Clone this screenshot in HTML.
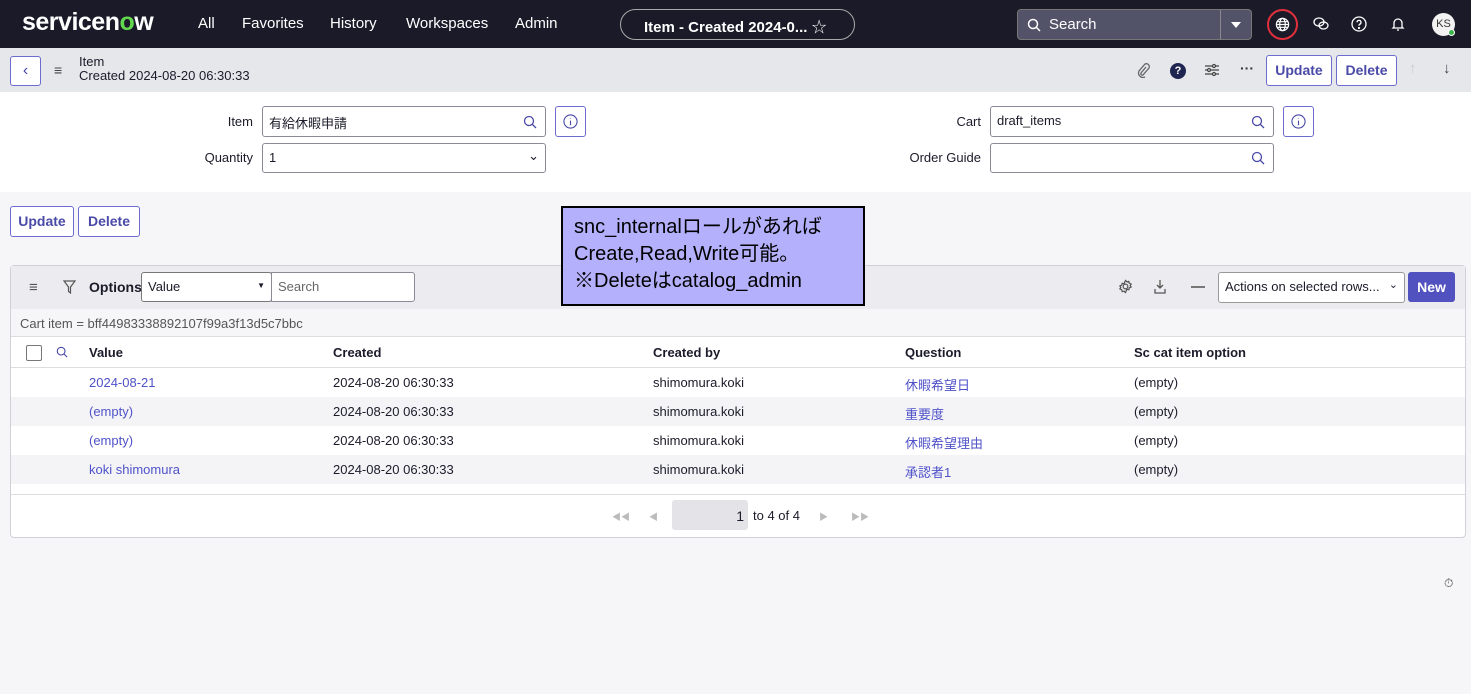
<!DOCTYPE html>
<html><head><meta charset="utf-8"><style>
*{box-sizing:border-box;margin:0;padding:0}
body{width:1471px;height:694px;background:#f6f6f8;font-family:"Liberation Sans","Noto Sans CJK JP",sans-serif;font-size:13px;color:#1b1b2a;position:relative;overflow:hidden}
.a{position:absolute}
.top{left:0;top:0;width:1471px;height:48px;background:#1a1a28;color:#fff}
.nav{top:15px;font-size:15px;color:#fff}
.btn{position:absolute;border:1px solid #6c6ccf;border-radius:3px;background:#fff;color:#4a4aa8;font-weight:bold;font-size:13px;text-align:center}
.inp{position:absolute;border:1px solid #8a8a99;border-radius:3px;background:#fff;font-size:13px;padding:6px 6px}
.lbl{position:absolute;font-size:13px;text-align:right}
.sb{position:absolute;border:1px solid #8a8a99;border-left:none;border-radius:0 3px 3px 0;background:#fff}
.row{position:absolute;left:11px;width:1454px;height:29px;font-size:13px}
.row span{position:absolute;top:7px}
.lk{color:#4f52c8}
</style></head><body>
<div class="a top">
 <div class="a" style="left:22px;top:8px;font-size:25px;font-weight:bold;letter-spacing:-0.5px">servicen<span style="color:#62d84e">o</span>w</div>
 <div class="a nav" style="left:198px">All</div>
 <div class="a nav" style="left:242px">Favorites</div>
 <div class="a nav" style="left:330px">History</div>
 <div class="a nav" style="left:406px">Workspaces</div>
 <div class="a nav" style="left:515px">Admin</div>
 <div class="a" style="left:620px;top:9px;width:235px;height:31px;border:1px solid #aaa;border-radius:16px;font-size:15px;font-weight:bold;padding:6px 0 0 23px">Item - Created 2024-0... <span style="font-weight:normal">☆</span></div>
 <div class="a" style="left:1017px;top:9px;width:235px;height:31px;background:#525268;border:1px solid #777;border-radius:4px;font-size:15px;padding:6px 0 0 31px">Search
  <svg class="a" style="left:9px;top:8px" width="14" height="14" viewBox="0 0 14 14"><circle cx="6" cy="6" r="4.5" fill="none" stroke="#fff" stroke-width="1.5"/><path d="M9.5 9.5l3.5 3.5" stroke="#fff" stroke-width="1.5"/></svg>
  <div class="a" style="left:202px;top:0;width:1px;height:29px;background:#888"></div>
  <div class="a" style="left:213px;top:12px;border:5px solid transparent;border-top:6px solid #fff"></div></div>
 <div class="a" style="left:1267px;top:9px;width:31px;height:31px;border:2px solid #e0303c;border-radius:50%"></div>
 <svg class="a" style="left:1275px;top:17px" width="15" height="15" viewBox="0 0 16 16" fill="none" stroke="#fff" stroke-width="1.3"><circle cx="8" cy="8" r="6.5"/><ellipse cx="8" cy="8" rx="3" ry="6.5"/><path d="M1.5 8h13M2.5 5h11M2.5 11h11"/></svg>
 <svg class="a" style="left:1313px;top:17px" width="16" height="14" viewBox="0 0 16 14" fill="none" stroke="#fff" stroke-width="1.3"><ellipse cx="6" cy="5" rx="5" ry="4"/><ellipse cx="10.5" cy="8.5" rx="4.5" ry="3.5"/></svg>
 <svg class="a" style="left:1351px;top:16px" width="16" height="16" viewBox="0 0 16 16" fill="none" stroke="#fff" stroke-width="1.3"><circle cx="8" cy="8" r="7"/><path d="M6 6.3a2 2 0 1 1 2.5 2c-.5.2-.5.6-.5 1.4"/><circle cx="8" cy="12" r=".5" fill="#fff"/></svg>
 <svg class="a" style="left:1391px;top:16px" width="14" height="16" viewBox="0 0 14 16" fill="none" stroke="#fff" stroke-width="1.3"><path d="M3 11V7a4 4 0 0 1 8 0v4l1 1H2z"/><path d="M6 14h2"/></svg>
 <div class="a" style="left:1432px;top:13px;width:23px;height:23px;border-radius:50%;background:#f2f2f2;color:#333;font-size:11px;text-align:center;line-height:23px">KS</div>
 <div class="a" style="left:1448px;top:29px;width:7px;height:7px;border-radius:50%;background:#3bb54a;border:1px solid #fff"></div>
</div>
<div class="a" style="left:0;top:48px;width:1471px;height:44px;background:#e6e7eb"></div>
<div class="btn" style="left:10px;top:56px;width:31px;height:30px;font-weight:normal;font-size:16px;line-height:27px">‹</div>
<div class="a" style="left:54px;top:62px;font-size:14px;color:#444">≡</div>
<div class="a" style="left:79px;top:55px;font-size:13px;line-height:14px">Item<br>Created 2024-08-20 06:30:33</div>
<svg class="a" style="left:1136px;top:62px" width="14" height="16" viewBox="0 0 14 16" fill="none" stroke="#666" stroke-width="1.3"><path d="M10 5L5 11a1.5 1.5 0 0 0 2 2l6-7a3 3 0 0 0-4-4L3 9a4.5 4.5 0 0 0 6 6"/></svg>
<div class="a" style="left:1170px;top:63px;width:16px;height:16px;border-radius:50%;background:#1e2550;color:#fff;font-size:11px;font-weight:bold;text-align:center;line-height:16px">?</div>
<svg class="a" style="left:1204px;top:63px" width="16" height="14" viewBox="0 0 16 14" stroke="#444" stroke-width="1.2" fill="#e6e7eb"><path d="M1 3h14M1 7h14M1 11h14"/><circle cx="10" cy="3" r="1.5"/><circle cx="5" cy="7" r="1.5"/><circle cx="10" cy="11" r="1.5"/></svg>
<div class="a" style="left:1240px;top:60px;font-size:14px;font-weight:bold;color:#333">···</div>
<div class="btn" style="left:1266px;top:55px;width:66px;height:31px;line-height:29px;font-size:14px">Update</div>
<div class="btn" style="left:1336px;top:55px;width:61px;height:31px;line-height:29px;font-size:14px">Delete</div>
<div class="a" style="left:1409px;top:60px;font-size:15px;color:#ccc">↑</div>
<div class="a" style="left:1443px;top:60px;font-size:15px;color:#445">↓</div>
<div class="a" style="left:0;top:92px;width:1471px;height:100px;background:#fff"></div>
<div class="lbl" style="left:150px;top:114px;width:103px">Item</div>
<div class="inp" style="left:262px;top:106px;width:255px;height:31px;border-radius:3px 0 0 3px">有給休暇申請</div>
<div class="sb" style="left:516px;top:106px;width:30px;height:31px"><svg class="a" style="left:7px;top:8px" width="14" height="14" viewBox="0 0 14 14"><circle cx="6" cy="6" r="4.5" fill="none" stroke="#4a4aa8" stroke-width="1.3"/><path d="M9.5 9.5l3.5 3.5" stroke="#4a4aa8" stroke-width="1.3"/></svg></div>
<div class="btn" style="left:555px;top:106px;width:31px;height:31px"><svg class="a" style="left:7px;top:7px" width="15" height="15" viewBox="0 0 16 16" fill="none" stroke="#4a4aa8" stroke-width="1.2"><circle cx="8" cy="8" r="7"/><path d="M8 7v5M8 4.5v.5"/></svg></div>
<div class="lbl" style="left:150px;top:150px;width:103px">Quantity</div>
<div class="inp" style="left:262px;top:143px;width:284px;height:30px">1<span class="a" style="right:6px;top:4px;font-size:13px">⌄</span></div>
<div class="lbl" style="left:880px;top:114px;width:101px">Cart</div>
<div class="inp" style="left:990px;top:106px;width:255px;height:31px;border-radius:3px 0 0 3px">draft_items</div>
<div class="sb" style="left:1244px;top:106px;width:30px;height:31px"><svg class="a" style="left:7px;top:8px" width="14" height="14" viewBox="0 0 14 14"><circle cx="6" cy="6" r="4.5" fill="none" stroke="#4a4aa8" stroke-width="1.3"/><path d="M9.5 9.5l3.5 3.5" stroke="#4a4aa8" stroke-width="1.3"/></svg></div>
<div class="btn" style="left:1283px;top:106px;width:31px;height:31px"><svg class="a" style="left:7px;top:7px" width="15" height="15" viewBox="0 0 16 16" fill="none" stroke="#4a4aa8" stroke-width="1.2"><circle cx="8" cy="8" r="7"/><path d="M8 7v5M8 4.5v.5"/></svg></div>
<div class="lbl" style="left:880px;top:150px;width:101px">Order Guide</div>
<div class="inp" style="left:990px;top:143px;width:255px;height:30px;border-radius:3px 0 0 3px"></div>
<div class="sb" style="left:1244px;top:143px;width:30px;height:30px"><svg class="a" style="left:7px;top:7px" width="14" height="14" viewBox="0 0 14 14"><circle cx="6" cy="6" r="4.5" fill="none" stroke="#4a4aa8" stroke-width="1.3"/><path d="M9.5 9.5l3.5 3.5" stroke="#4a4aa8" stroke-width="1.3"/></svg></div>
<div class="btn" style="left:10px;top:206px;width:64px;height:31px;line-height:29px;font-size:14px">Update</div>
<div class="btn" style="left:78px;top:206px;width:62px;height:31px;line-height:29px;font-size:14px">Delete</div>
<div class="a" style="left:10px;top:265px;width:1456px;height:273px;border:1px solid #d0d0d8;border-radius:4px;background:#fff"></div>
<div class="a" style="left:11px;top:266px;width:1454px;height:43px;background:#ececf0"></div>
<div class="a" style="left:11px;top:309px;width:1454px;height:28px;background:#f6f6f8;border-bottom:1px solid #ddd"></div>
<div class="a" style="left:29px;top:279px;font-size:15px;color:#555">≡</div>
<svg class="a" style="left:63px;top:280px" width="13" height="14" viewBox="0 0 13 14" fill="none" stroke="#555" stroke-width="1.2"><path d="M1 1h11L7.5 7v6l-2-1.5V7z"/></svg>
<div class="a" style="left:89px;top:279px;font-size:14px;font-weight:bold">Options</div>
<div class="inp" style="left:141px;top:272px;width:131px;height:30px;border-color:#777">Value<span class="a" style="right:6px;top:8px;font-size:8px">▼</span></div>
<div class="inp" style="left:271px;top:272px;width:144px;height:30px;color:#666;border-radius:0 3px 3px 0">Search</div>
<svg class="a" style="left:1118px;top:279px" width="15" height="15" viewBox="0 0 16 16" fill="none" stroke="#555" stroke-width="1.3"><circle cx="8" cy="8" r="2.5"/><path d="M8 1.5l1.5 1.5 2-.5.5 2 2 1-1 1.5 1 1.5-2 1-.5 2-2-.5L8 14.5 6.5 13l-2 .5-.5-2-2-1L3 9 2 7.5l2-1 .5-2 2 .5z"/></svg>
<svg class="a" style="left:1153px;top:279px" width="14" height="16" viewBox="0 0 14 16" fill="none" stroke="#555" stroke-width="1.3"><path d="M7 1v8M4 6l3 3 3-3M2 10v4h10v-4"/></svg>
<div class="a" style="left:1191px;top:286px;width:14px;height:1.5px;background:#777"></div>
<div class="inp" style="left:1218px;top:272px;width:187px;height:31px;border-color:#999">Actions on selected rows...<span class="a" style="right:6px;top:5px;font-size:11px">⌄</span></div>
<div class="a" style="left:1408px;top:272px;width:47px;height:30px;background:#5151c0;border-radius:3px;color:#fff;font-weight:bold;font-size:14px;text-align:center;line-height:30px">New</div>
<div class="a" style="left:20px;top:316px;color:#555">Cart item = bff44983338892107f99a3f13d5c7bbc</div>
<div class="row" style="top:337px;height:31px;border-bottom:1px solid #ddd;font-weight:bold">
 <div class="a" style="left:15px;top:8px;width:16px;height:16px;border:1px solid #777;border-radius:2px"></div>
 <svg class="a" style="left:45px;top:9px" width="12" height="12" viewBox="0 0 14 14"><circle cx="6" cy="6" r="4.5" fill="none" stroke="#4a4aa8" stroke-width="1.3"/><path d="M9.5 9.5l3.5 3.5" stroke="#4a4aa8" stroke-width="1.3"/></svg>
 <span style="left:78px;top:8px">Value</span><span style="left:322px;top:8px">Created</span><span style="left:642px;top:8px">Created by</span><span style="left:894px;top:8px">Question</span><span style="left:1123px;top:8px">Sc cat item option</span></div>
<div class="row" style="top:368px;background:#fff"><span class="lk" style="left:78px">2024-08-21</span><span style="left:322px">2024-08-20 06:30:33</span><span style="left:642px">shimomura.koki</span><span class="lk" style="left:894px">休暇希望日</span><span style="left:1123px">(empty)</span></div>
<div class="row" style="top:397px;background:#f4f4f7"><span class="lk" style="left:78px">(empty)</span><span style="left:322px">2024-08-20 06:30:33</span><span style="left:642px">shimomura.koki</span><span class="lk" style="left:894px">重要度</span><span style="left:1123px">(empty)</span></div>
<div class="row" style="top:426px;background:#fff"><span class="lk" style="left:78px">(empty)</span><span style="left:322px">2024-08-20 06:30:33</span><span style="left:642px">shimomura.koki</span><span class="lk" style="left:894px">休暇希望理由</span><span style="left:1123px">(empty)</span></div>
<div class="row" style="top:455px;background:#f4f4f7"><span class="lk" style="left:78px">koki shimomura</span><span style="left:322px">2024-08-20 06:30:33</span><span style="left:642px">shimomura.koki</span><span class="lk" style="left:894px">承認者1</span><span style="left:1123px">(empty)</span></div>
<div class="a" style="left:11px;top:494px;width:1454px;height:1px;background:#ddd"></div>
<div class="a" style="left:612px;top:510px;font-size:9px;color:#bbb">◀◀</div>
<div class="a" style="left:649px;top:510px;font-size:9px;color:#bbb">◀</div>
<div class="a" style="left:672px;top:500px;width:76px;height:30px;background:#e4e4e8;border-radius:3px;text-align:right;padding:8px 4px 0 0;font-size:14px">1</div>
<div class="a" style="left:753px;top:508px;font-size:13px">to 4 of 4</div>
<div class="a" style="left:819px;top:510px;font-size:9px;color:#bbb">▶</div>
<div class="a" style="left:851px;top:510px;font-size:9px;color:#bbb">▶▶</div>
<div class="a" style="left:1444px;top:576px;font-size:12px;color:#444">⏱</div>
<div class="a" style="left:561px;top:206px;width:304px;height:100px;background:#b4b0fc;border:2px solid #000;padding:6px 0 0 11px;font-size:20px;line-height:27px;color:#000;white-space:nowrap">snc_internalロールがあれば<br>Create,Read,Write可能。<br>※Deleteはcatalog_admin</div>
</body></html>
